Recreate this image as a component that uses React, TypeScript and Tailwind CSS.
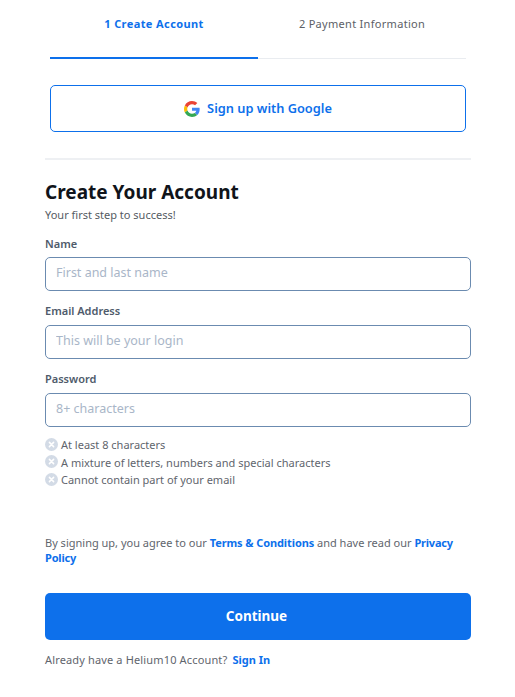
const font = "font-['Noto_Sans','Open_Sans',sans-serif]";

function GoogleIcon() {
  return (
    <svg width="16" height="16" viewBox="0 0 48 48" className="shrink-0">
      <path fill="#EA4335" d="M24 9.5c3.54 0 6.71 1.22 9.21 3.6l6.85-6.85C35.9 2.38 30.47 0 24 0 14.62 0 6.51 5.38 2.56 13.22l7.98 6.19C12.43 13.72 17.74 9.5 24 9.5z" />
      <path fill="#4285F4" d="M46.98 24.55c0-1.57-.15-3.09-.38-4.55H24v9.02h12.94c-.58 2.96-2.26 5.48-4.78 7.18l7.73 6c4.51-4.18 7.09-10.36 7.09-17.65z" />
      <path fill="#FBBC05" d="M10.53 28.59c-.48-1.45-.76-2.99-.76-4.59s.27-3.14.76-4.59l-7.98-6.19C.92 16.46 0 20.12 0 24c0 3.88.92 7.54 2.56 10.78l7.97-6.19z" />
      <path fill="#34A853" d="M24 48c6.48 0 11.93-2.13 15.89-5.81l-7.73-6c-2.15 1.45-4.92 2.3-8.16 2.3-6.26 0-11.57-4.22-13.47-9.91l-7.98 6.19C6.51 42.62 14.62 48 24 48z" />
    </svg>
  );
}

function XIcon() {
  return (
    <svg width="13" height="13" viewBox="0 0 13 13" className="shrink-0 -mt-[2px]">
      <circle cx="6.5" cy="6.5" r="6.5" fill="#d3dbe6" />
      <path d="M4.4 4.4l4.2 4.2M8.6 4.4l-4.2 4.2" stroke="#ffffff" strokeWidth="1.5" strokeLinecap="round" />
    </svg>
  );
}

function Field({ label, placeholder, type = "text", first = false }: { label: string; placeholder: string; type?: string; first?: boolean }) {
  return (
    <div className="flex flex-col">
      <label className={`text-[11px] leading-[16px] font-semibold text-[#4f5b6b] ${first ? "mb-[5px]" : "mb-[6px]"}`}>{label}</label>
      <input
        type={type}
        placeholder={placeholder}
        className="h-[34px] w-full rounded-[5px] border border-[#6b8bb0] bg-white px-[10px] pb-[3px] text-[12.5px] text-[#2d3748] outline-none placeholder:text-[#a9b6c8]"
      />
    </div>
  );
}

export default function App() {
  const rules = ["At least 8 characters", "A mixture of letters, numbers and special characters", "Cannot contain part of your email"];
  return (
    <div className={`${font} w-[515px] h-[697px] bg-white overflow-hidden pl-[45px] pr-[44px]`}>
      <div className="ml-[5px] mr-[5px] flex h-[59px] border-b border-[#e9ecf0]">
        <div className="flex-1 -mb-px border-b-2 border-[#0d70eb] pt-[16px] text-center text-[11px] leading-[16px] font-bold tracking-[0.4px] text-[#0d70eb]">
          1 Create Account
        </div>
        <div className="flex-1 pt-[16px] text-center text-[11px] leading-[16px] tracking-[0.3px] text-[#5c6066]">
          2 Payment Information
        </div>
      </div>

      <button className="ml-[5px] mt-[26px] flex h-[47px] w-[416px] items-center justify-center gap-[7px] rounded-[5px] border border-[#0d70eb] bg-white text-[12.8px] font-semibold text-[#0d70eb]">
        <GoogleIcon />
        Sign up with Google
      </button>

      <div className="mt-[26px] h-[2px] bg-[#eef0f3]" />

      <h1 className="mt-[18px] text-[19px] leading-[28px] font-bold text-[#10141a]">Create Your Account</h1>
      <p className="mt-[1px] text-[11px] leading-[16px] text-[#555b63]">Your first step to success!</p>

      <div className="mt-[13px] flex flex-col gap-[12px]">
        <Field label="Name" placeholder="First and last name" first />
        <Field label="Email Address" placeholder="This will be your login" />
        <Field label="Password" placeholder="8+ characters" type="password" />
      </div>

      <ul className="mt-[10px] flex flex-col gap-[1.5px]">
        {rules.map((r) => (
          <li key={r} className="flex h-[16px] items-center gap-[3px] text-[11px] leading-[16px] text-[#5f656d]">
            <XIcon />
            {r}
          </li>
        ))}
      </ul>

      <p className="mt-[47px] text-[11px] leading-[15px] text-[#5f656d]">
        By signing up, you agree to our <a className="font-bold tracking-[-0.1px] text-[#0d70eb]">Terms &amp; Conditions</a> and have read our{" "}
        <a className="font-bold tracking-[-0.2px] text-[#0d70eb]">Privacy Policy</a>
      </p>

      <button className="mt-[28px] h-[47px] w-full rounded-[5px] bg-[#0d70eb] pr-[3px] text-[13.5px] font-bold text-white">Continue</button>

      <p className="mt-[12px] text-[11px] leading-[16px] tracking-[0.15px] text-[#5f656d]">
        Already have a Helium10 Account? <a className="ml-[2px] font-bold tracking-normal text-[#0d70eb]">Sign In</a>
      </p>
    </div>
  );
}
